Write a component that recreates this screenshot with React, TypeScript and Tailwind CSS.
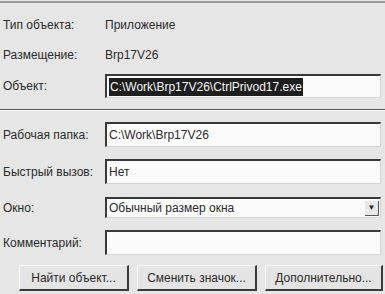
import React from 'react';

const Field = ({ children, h = 'h-[25px]' }: { children?: React.ReactNode; h?: string }) => (
  <div
    className={`${h} flex-1 flex items-center bg-[#fbfbfb] border-t-2 border-l-2 border-[#3a3a3a] border-b border-r border-b-[#d4d4d4] border-r-[#d4d4d4] pl-[2px] mr-[4px]`}
  >
    {children}
  </div>
);

const Btn = ({ children, w }: { children: React.ReactNode; w: string }) => (
  <div
    className={`${w} h-[26px] flex items-center justify-center border-t border-l border-[#fafafa] border-b-2 border-r-2 border-b-[#3a3a3a] border-r-[#3a3a3a] bg-[#e4e4e4]`}
  >
    {children}
  </div>
);

export default function App() {
  return (
    <div className="w-[385px] h-[294px] overflow-hidden bg-[#e6e6e6] text-[#2b2b2b] text-[12px] leading-none font-['Liberation_Sans',Arial,sans-serif]">
      <div className="h-[2px] bg-[#9a9a9a] mt-[1px]" />
      <div className="flex flex-col pl-[3px] pt-[11px]">
        <div className="flex items-center h-[22px]">
          <span className="w-[102px]">Тип объекта:</span>
          <span>Приложение</span>
        </div>
        <div className="flex items-center h-[22px] mt-[8px]">
          <span className="w-[102px]">Размещение:</span>
          <span>Brp17V26</span>
        </div>
        <div className="flex items-center mt-[8px]">
          <span className="w-[102px]">Объект:</span>
          <Field h="h-[24px]">
            <span className="bg-[#1e1e1e] text-[#f4f4f4] px-[1px] py-[3px]">C:\Work\Brp17V26\CtrlPrivod17.exe</span>
          </Field>
        </div>
      </div>
      <div className="mt-[11px] h-[1px] bg-[#5a5a5a]" />
      <div className="h-[1px] bg-[#fafafa]" />
      <div className="flex flex-col pl-[3px] pt-[11px]">
        <div className="flex items-center">
          <span className="w-[102px]">Рабочая папка:</span>
          <Field>C:\Work\Brp17V26</Field>
        </div>
        <div className="flex items-center mt-[12px]">
          <span className="w-[102px]">Быстрый вызов:</span>
          <Field>Нет</Field>
        </div>
        <div className="flex items-center mt-[13px]">
          <span className="w-[102px]">Окно:</span>
          <Field h="h-[21px]">
            <span className="flex-1">Обычный размер окна</span>
            <span className="w-[14px] h-[15px] mr-[1px] flex items-center justify-center bg-[#e8e8e8] border-b border-r border-[#555] text-[8px]">▼</span>
          </Field>
        </div>
        <div className="flex items-center mt-[12px]">
          <span className="w-[102px]">Комментарий:</span>
          <Field />
        </div>
      </div>
      <div className="flex pl-[19px] gap-[8px] mt-[10px]">
        <Btn w="w-[110px]">Найти объект...</Btn>
        <Btn w="w-[120px]">Сменить значок...</Btn>
        <Btn w="w-[118px]">Дополнительно...</Btn>
      </div>
    </div>
  );
}
